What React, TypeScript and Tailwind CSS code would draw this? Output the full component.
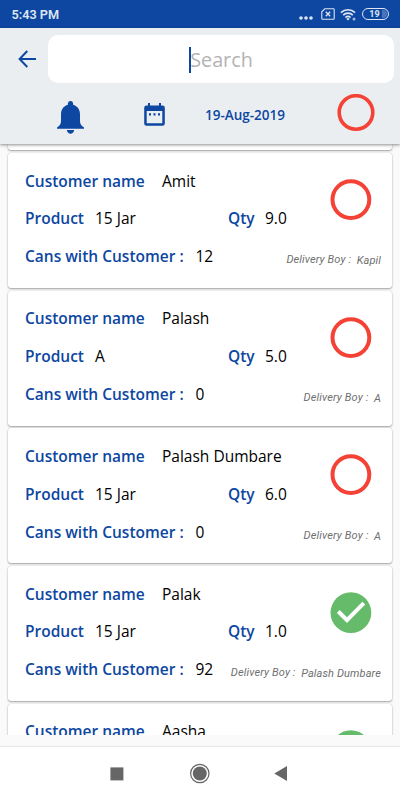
interface Delivery {
  name: string;
  product: string;
  qty: string;
  cans: string;
  deliveryBoy: string;
  done: boolean;
}

const deliveries: Delivery[] = [
  { name: "Amit", product: "15 Jar", qty: "9.0", cans: "12", deliveryBoy: "Kapil", done: false },
  { name: "Palash", product: "A", qty: "5.0", cans: "0", deliveryBoy: "A", done: false },
  { name: "Palash Dumbare", product: "15 Jar", qty: "6.0", cans: "0", deliveryBoy: "A", done: false },
  { name: "Palak", product: "15 Jar", qty: "1.0", cans: "92", deliveryBoy: "Palash Dumbare", done: true },
];

function StatusBar() {
  return (
    <div className="flex h-7 shrink-0 items-center justify-between bg-[#0d47a1] pr-[11px] pl-[11.500px] text-[#dfe6f3]">
      <span className="pt-px font-[Roboto] text-[12.700px] font-semibold">5:43 PM</span>
      <div className="flex items-center">
        <svg className="mt-[7px] mr-[8px]" width="14" height="4" viewBox="0 0 14 4" fill="currentColor">
          <circle cx="2" cy="2" r="1.8" />
          <circle cx="7" cy="2" r="1.8" />
          <circle cx="12" cy="2" r="1.8" />
        </svg>
        <svg className="mr-[5px]" width="14" height="12" viewBox="0 0 14 12" fill="none" stroke="currentColor" strokeWidth="1.1">
          <path d="M3.800.8h8.600a.8.8 0 0 1 .8.8v8.800a.8.8 0 0 1-.8.8H1.600a.8.8 0 0 1-.8-.8V3.800z" />
          <path d="m4.800 3.700 4.400 4.600m0-4.600L4.800 8.300" strokeWidth="1.300" />
        </svg>
        <svg className="mr-[5px]" width="17" height="13" viewBox="0 0 17 13" fill="none" stroke="currentColor" strokeWidth="1.700">
          <path d="M.9 4.600a10.300 10.300 0 0 1 14.200 0" />
          <path d="M3.200 7.100a6.900 6.900 0 0 1 9.600 0" />
          <path d="M5.400 9.500a3.800 3.800 0 0 1 5.200 0" />
          <path d="M6.300 10.700 8 12.500l1.700-1.800a2.500 2.500 0 0 0-3.400 0z" fill="currentColor" stroke="none" />
          <circle cx="14" cy="11" r="1.500" fill="currentColor" stroke="none" opacity=".7" />
        </svg>
        <div className="relative flex h-3 w-[27px] items-center justify-center overflow-hidden rounded-full border-[1.3px] border-[#dfe6f3] font-[Roboto] text-[9px] leading-none font-bold">
          <span className="absolute inset-y-[1px] right-[1px] w-[5px] rounded-r-full bg-[#4a75ba]" />
          <span className="relative -left-px">19</span>
        </div>
      </div>
    </div>
  );
}

function Header() {
  return (
    <header className="relative z-10 h-[116px] shrink-0 bg-[#eaeef1] shadow-[0_1px_3px_rgba(0,0,0,0.45)]">
      <div className="flex items-center pt-[7px] pr-1.5">
        <svg className="mr-[12px] ml-[18px]" width="18" height="18" viewBox="0 0 18 18" fill="none" stroke="#0d47a1" strokeWidth="2">
          <path d="M18 9H2M9.300 1 1.600 9l7.700 8" />
        </svg>
        <div className="flex h-12 flex-1 items-center justify-center rounded-[10px] bg-white pt-px">
          <span className="h-[26px] w-[2px] bg-[#0d47a1]" />
          <span className="-ml-px text-[19.800px] text-[#b3b3b3]">Search</span>
        </div>
      </div>
      <div className="flex pt-[10px]">
        <svg className="mt-[8px] ml-[57px]" width="27" height="33" viewBox="0 0 27 33" fill="#0d47a1">
          <path d="M13.500 0c-1.600 0-2.600 1.200-2.600 2.700v1C6.500 5 4 8.600 4 13.200V20c0 3.200-1.600 5-4 6.600V27.700h27v-1.100c-2.400-1.600-4-3.400-4-6.600v-6.800c0-4.600-2.500-8.200-6.900-9.500v-1C16.100 1.200 15.100 0 13.500 0z" />
          <path d="M9.800 29h7.400c-.5 2.500-1.900 3.700-3.700 3.700S10.300 31.500 9.800 29z" />
        </svg>
        <svg className="mt-[10px] ml-[60px]" width="21" height="23" viewBox="0 0 21 23" fill="#0d47a1">
          <path fillRule="evenodd" d="M4 0h2v2.500h9V0h2v2.500h1.500a2.300 2.300 0 0 1 2.300 2.300v15.700a2.300 2.300 0 0 1-2.300 2.300h-16A2.300 2.300 0 0 1 .2 20.500V4.800a2.300 2.300 0 0 1 2.300-2.300H4zM2.700 8v12.300h15.600V8z" />
          <path d="M5 10.200h2v2.300H5zM9.500 10.200h2v2.300h-2zM14 10.200h2v2.300h-2z" />
        </svg>
        <span className="mt-[5px] ml-[40px] w-[131.500px] text-[13.500px] leading-[34px] font-semibold whitespace-nowrap text-[#0d47a1]">
          19-Aug-2019
        </span>
        <svg className="mt-px" width="38" height="38" viewBox="0 0 38 38">
          <circle cx="19" cy="18.500" r="16.800" fill="none" stroke="#f44336" strokeWidth="3.600" />
        </svg>
      </div>
    </header>
  );
}

function StatusMark({ done }: { done: boolean }) {
  return (
    <svg width="42" height="42" viewBox="0 0 42 42">
      {done ? (
        <>
          <circle cx="20.900" cy="20.700" r="20.400" fill="#66bb6a" />
          <path d="m8.300 19.500 8.700 8.700L33.800 11.200" fill="none" stroke="#fff" strokeWidth="4" />
        </>
      ) : (
        <circle cx="20.900" cy="20.600" r="18.400" fill="none" stroke="#f44336" strokeWidth="4" />
      )}
    </svg>
  );
}

function DeliveryCard({ delivery }: { delivery: Delivery }) {
  return (
    <article className="relative h-[135px] shrink-0 rounded-[3px] bg-white pt-[9.800px] pr-[11px] pl-[17px] text-[15.500px] leading-[37.700px] whitespace-nowrap text-black shadow-[0_0_1px_rgba(0,0,0,0.2),0_1px_2px_rgba(0,0,0,0.35)]">
      <div className="flex">
        <span className="w-[137px] font-semibold text-[#0d47a1]">Customer name</span>
        <span>{delivery.name}</span>
      </div>
      <div className="flex">
        <span className="w-[70px] font-semibold text-[#0d47a1]">Product</span>
        <span className="w-[133px]">{delivery.product}</span>
        <span className="w-[37px] font-semibold text-[#0d47a1]">Qty</span>
        <span>{delivery.qty}</span>
      </div>
      <div className="flex">
        <span className="w-[170.500px] font-semibold text-[#0d47a1]">Cans with Customer :</span>
        <span>{delivery.cans}</span>
        <span className="ml-auto pt-[3px] font-[Roboto] text-[11px] tracking-[0.120px] text-[#6f6f6f] italic">
          Delivery Boy :
          <span className="relative top-px ml-[5.500px]">{delivery.deliveryBoy}</span>
        </span>
      </div>
      <div className="absolute top-[26px] right-[20px] flex">
        <StatusMark done={delivery.done} />
      </div>
    </article>
  );
}

// Last row of the list, only its top is scrolled into view
function PartialCard({ name, done }: { name: string; done: boolean }) {
  return (
    <article className="relative h-[135px] shrink-0 rounded-[3px] bg-white pt-[9.800px] pl-[17px] text-[15.500px] leading-[37.700px] whitespace-nowrap text-black shadow-[0_0_1px_rgba(0,0,0,0.2),0_1px_2px_rgba(0,0,0,0.35)]">
      <div className="flex">
        <span className="w-[137px] font-semibold text-[#0d47a1]">Customer name</span>
        <span>{name}</span>
      </div>
      <div className="absolute top-[26px] right-[20px] flex">
        <StatusMark done={done} />
      </div>
    </article>
  );
}

function NavigationBar() {
  return (
    <nav className="h-[54px] shrink-0 border-t border-[#e6e6e6] bg-white">
      <div className="flex h-[53px] items-center pl-[110px]">
        <svg width="14" height="14" viewBox="0 0 14 14">
          <path d="M.4.4h13v13H.4z" fill="#666" />
        </svg>
        <svg className="ml-[65px]" width="21" height="21" viewBox="0 0 21 21">
          <circle cx="10.800" cy="10.500" r="9.200" fill="none" stroke="#666" strokeWidth="1.200" />
          <circle cx="10.800" cy="10.500" r="7" fill="#666" />
        </svg>
        <svg className="ml-[64px]" width="13" height="15" viewBox="0 0 13 15">
          <path d="M13 0v15L.3 7.500z" fill="#666" />
        </svg>
      </div>
    </nav>
  );
}

export default function App() {
  return (
    <div className="flex h-[800px] w-[400px] flex-col overflow-hidden bg-[#fafafa] font-['Open_Sans','Noto_Sans',sans-serif]">
      <StatusBar />
      <Header />
      <main className="flex h-[591px] shrink-0 flex-col gap-[2.670px] overflow-hidden px-2">
        <div className="h-[6.330px] shrink-0 rounded-b-[3px] bg-white shadow-[0_0_1px_rgba(0,0,0,0.2),0_1px_2px_rgba(0,0,0,0.35)]" />
        {deliveries.map((delivery) => (
          <DeliveryCard key={delivery.name} delivery={delivery} />
        ))}
        <PartialCard name="Aasha" done />
      </main>
      <div className="h-[11px] shrink-0" />
      <NavigationBar />
    </div>
  );
}
